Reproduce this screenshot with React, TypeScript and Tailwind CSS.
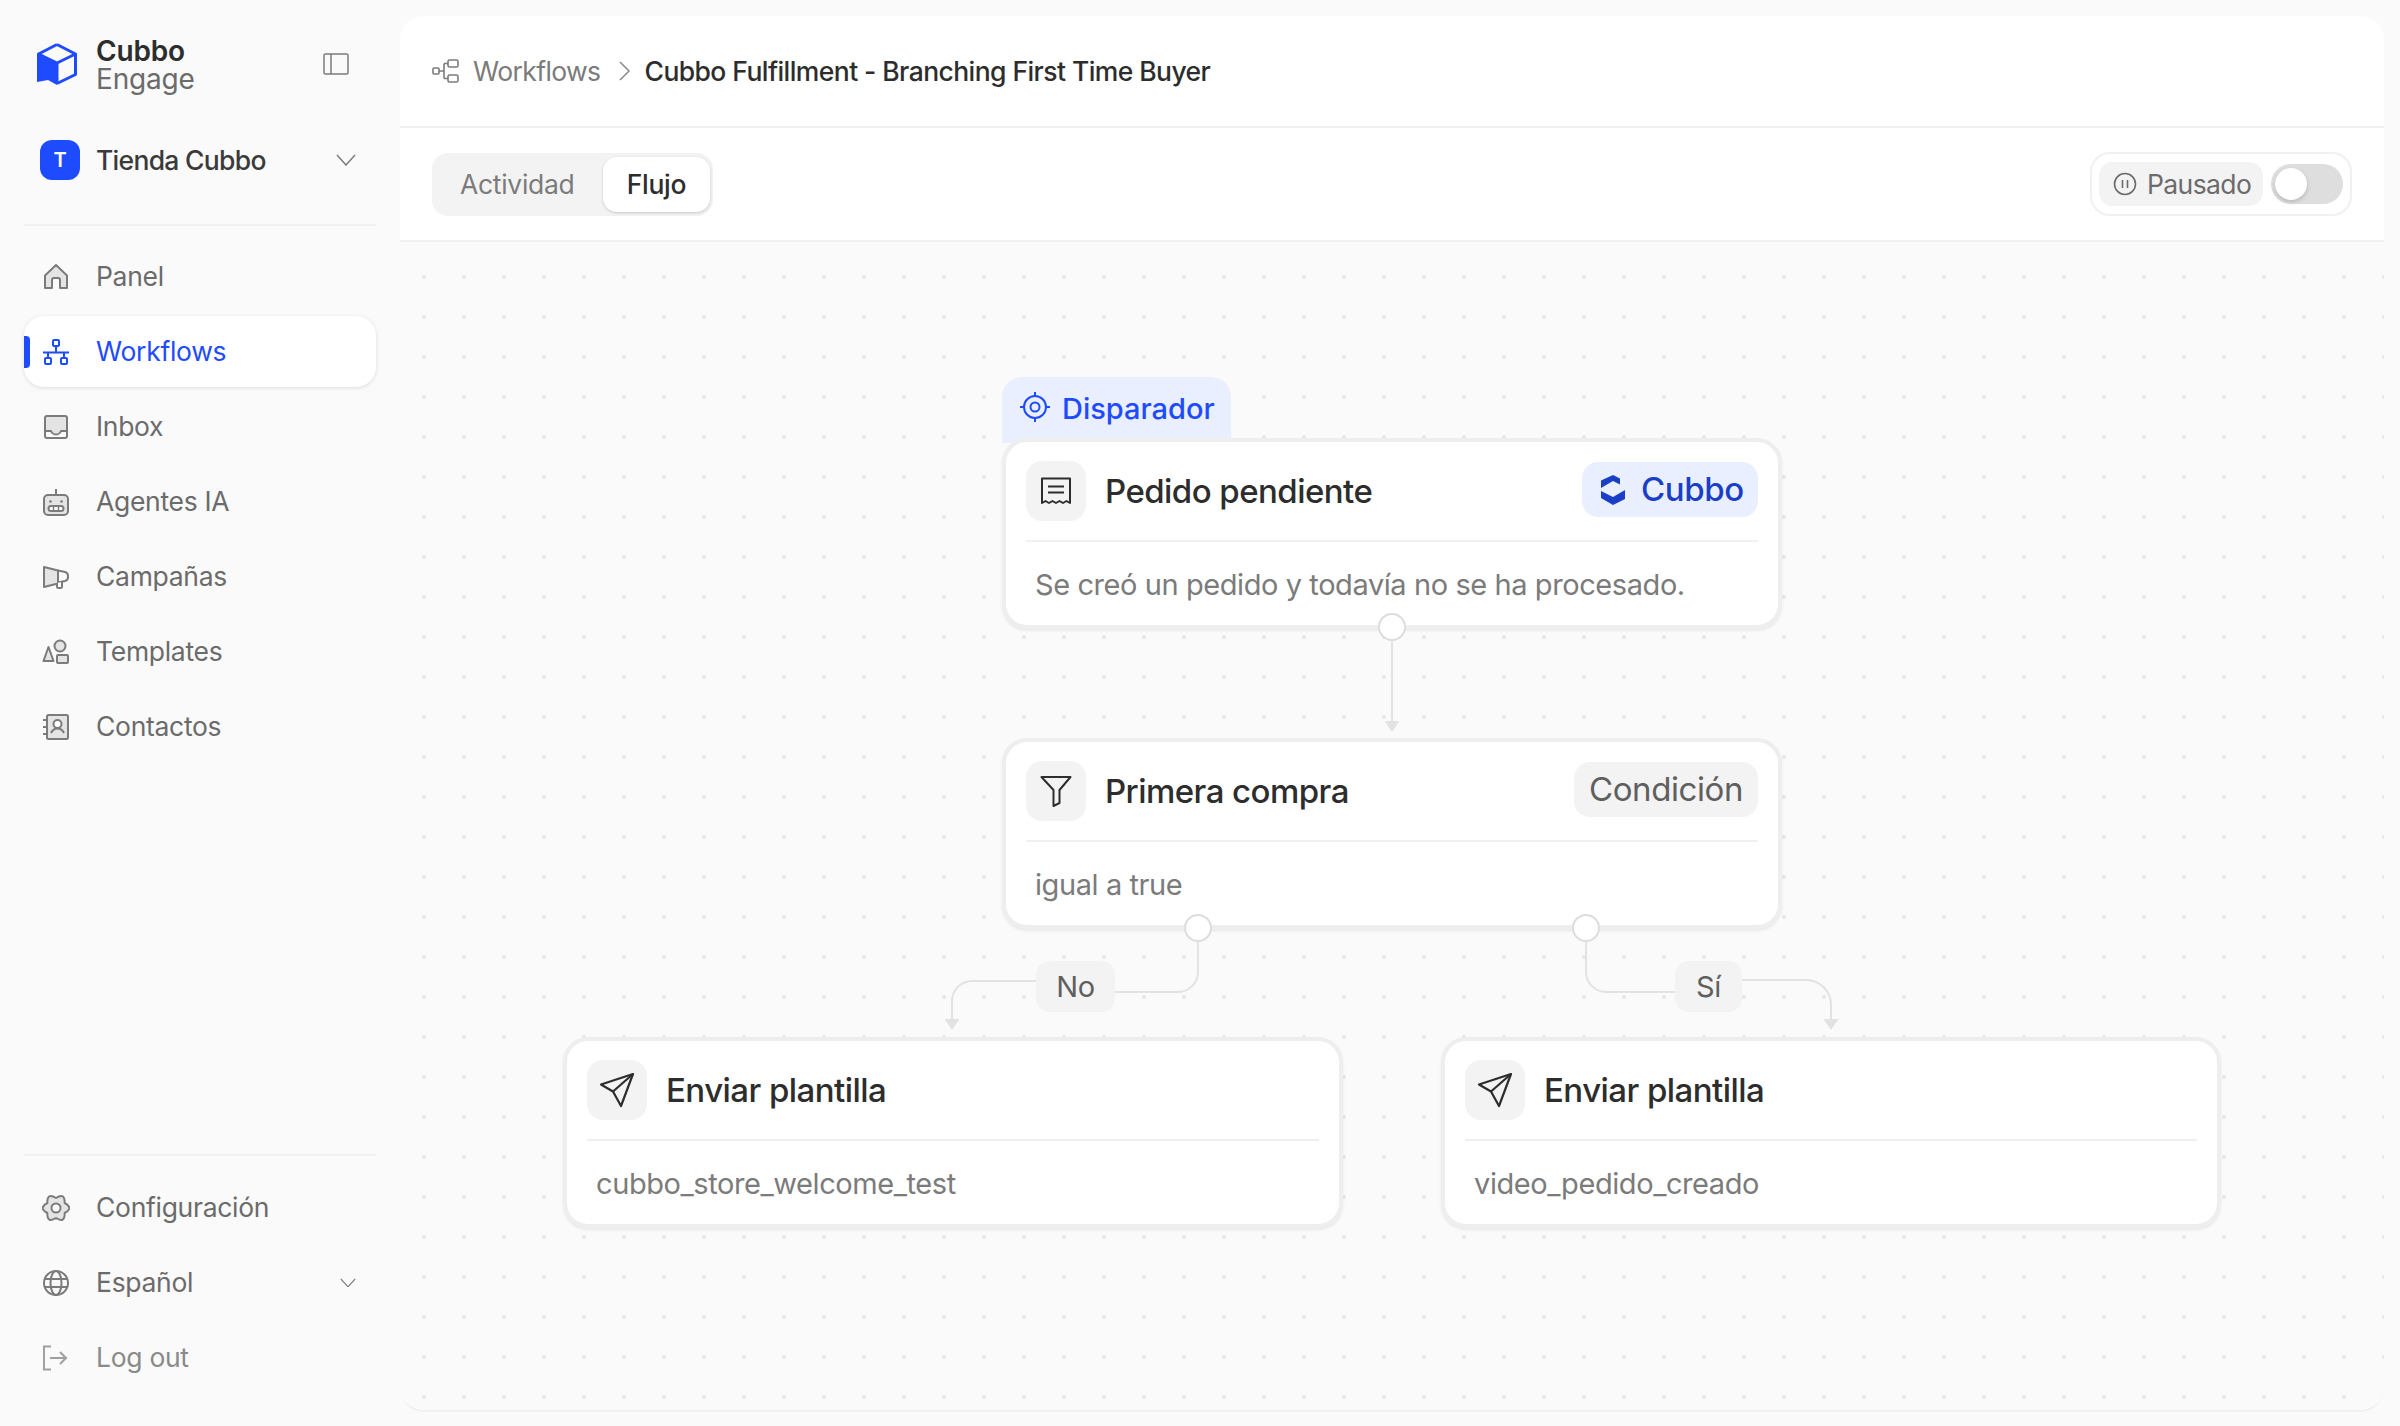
import React from "react";

const G = "#7b7b7b";
const F = "#e4e4e4";

const HomeIcon = () => (
  <svg width="28" height="28" viewBox="0 0 28 28" fill="none" stroke={G} strokeWidth="2" strokeLinejoin="round">
    <path d="M3 25V12.500L14 2l11 10.500V25h-7v-8a2 2 0 0 0-2-2h-4a2 2 0 0 0-2 2v8H3Z" fill={F} />
  </svg>
);
const FlowIcon = () => (
  <svg width="28" height="28" viewBox="0 0 28 28" fill="none" stroke="#1f4bff" strokeWidth="2" strokeLinejoin="round">
    <rect x="11" y="2" width="6" height="6" rx="1" />
    <path d="M14 8v6M1 14.500h26M6 14.500V20M22 14.500V20" />
    <rect x="3" y="20" width="6" height="6" rx="1" />
    <rect x="19" y="20" width="6" height="6" rx="1" />
  </svg>
);
const InboxIcon = () => (
  <svg width="28" height="28" viewBox="0 0 28 28" fill="none" stroke={G} strokeWidth="2" strokeLinejoin="round">
    <path d="M4 4h20v13h-5c-1 3-2.500 4-5 4s-4-1-5-4H4V4Z" fill={F} stroke="none" />
    <rect x="3" y="3" width="22" height="22" rx="2" />
    <path d="M3 18h6c1 2.500 2.500 3.500 5 3.500s4-1 5-3.500h6" />
  </svg>
);
const RobotIcon = () => (
  <svg width="28" height="28" viewBox="0 0 28 28" fill="none" stroke={G} strokeWidth="2" strokeLinejoin="round">
    <path d="M14 1v6" />
    <rect x="2" y="7" width="24" height="20" rx="4" fill={F} />
    <circle cx="8.500" cy="13.500" r="1.300" fill={G} stroke="none" />
    <circle cx="19.500" cy="13.500" r="1.300" fill={G} stroke="none" />
    <rect x="6.500" y="18" width="15" height="5" rx="2.500" fill="#fff" />
    <path d="M11.500 18v5M16.500 18v5" strokeWidth="1.500" />
  </svg>
);
const MegaIcon = () => (
  <svg width="28" height="24" viewBox="0 0 28 24" fill="none" stroke={G} strokeWidth="2" strokeLinejoin="round">
    <path d="M2 2l14 3.500v13L2 22V2Z" fill={F} />
    <path d="M16 5.500l7 1.500a4 4 0 0 1 3 4v1a4 4 0 0 1-3 4l-7 1.500" />
    <path d="M15 18v3.500a1.500 1.500 0 0 0 1.500 1.500h2a1.500 1.500 0 0 0 1.500-1.500V17" fill="#fff" />
  </svg>
);
const ShapesIcon = () => (
  <svg width="28" height="26" viewBox="0 0 28 26" fill="none" stroke={G} strokeWidth="2" strokeLinejoin="round">
    <circle cx="18" cy="7" r="5.500" fill={F} />
    <path d="M6.500 8L1.500 22h10L6.500 8Z" fill={F} />
    <rect x="15" y="16" width="11" height="8" rx="1" fill={F} />
  </svg>
);
const ContactIcon = () => (
  <svg width="28" height="28" viewBox="0 0 28 28" fill="none" stroke={G} strokeWidth="2" strokeLinejoin="round">
    <rect x="5" y="2" width="21" height="24" rx="1.500" fill={F} />
    <path d="M1 7h4M1 14h4M1 21h4" />
    <circle cx="15.500" cy="11" r="4" fill="#fff" />
    <path d="M9 20c1.500-3 3.500-4.500 6.500-4.500S20.500 17 22 20" />
  </svg>
);
const GearIcon = () => (
  <svg width="28" height="28" viewBox="0 0 28 28" fill="none" stroke={G} strokeWidth="2" strokeLinejoin="round">
    <path d="M22.660 9Q32 14 22.660 19 23 29.600 14 24 5 29.600 5.340 19-4 14 5.340 9 5-1.600 14 4 23-1.600 22.660 9Z" fill={F} />
    <circle cx="14" cy="14" r="4.500" fill="#fafafa" />
  </svg>
);
const GlobeIcon = () => (
  <svg width="28" height="28" viewBox="0 0 28 28" fill="none" stroke={G} strokeWidth="2">
    <circle cx="14" cy="14" r="12" />
    <ellipse cx="14" cy="14" rx="5.500" ry="12" />
    <path d="M2.500 10h23M2.500 18h23" />
  </svg>
);
const LogoutIcon = () => (
  <svg width="26" height="26" viewBox="0 0 26 26" fill="none" stroke="#a0a0a0" strokeWidth="2">
    <path d="M9 1.500H2v23h7" />
    <path d="M8 13h16M18 7l6 6-6 6" />
  </svg>
);
const Chevron = ({ size = 20 }: { size?: number }) => (
  <svg width={size} height={size * 0.6} viewBox="0 0 20 12" fill="none" stroke="#7b7b7b" strokeWidth="1.500">
    <path d="M1 1l9 10 9-10" />
  </svg>
);
const Logo = () => (
  <svg width="42" height="44" viewBox="0 0 42 44" fill="none">
    <path d="M21 2.500L39.500 12v20.500L21 41.500" stroke="#1f4bff" strokeWidth="3" strokeLinejoin="round" />
    <path d="M21 2.500L2.500 12 21 21l18.500-9" stroke="#1f4bff" strokeWidth="3" strokeLinejoin="round" />
    <path d="M21 21v20.500" stroke="#1f4bff" strokeWidth="3" />
    <path d="M1 12l20 9.500V43l-9-5-11 2V12Z" fill="#1f4bff" />
  </svg>
);
const PanelIcon = () => (
  <svg width="26" height="22" viewBox="0 0 26 22" fill="none" stroke="#7b7b7b" strokeWidth="1.500">
    <rect x="1" y="1" width="24" height="20" rx="1.500" />
    <path d="M8 1v20" />
  </svg>
);
const ReceiptIcon = () => (
  <svg width="32" height="30" viewBox="0 0 32 30" fill="none" stroke="#2d2d2d" strokeWidth="2">
    <path d="M2 27V2.500h28V27l-3.500-2-3.500 2-3.500-2-3.500 2-3.500-2-3.500 2-3.500-2L2 27Z" strokeLinejoin="round" />
    <path d="M8 10.500h16M8 16.500h16" />
  </svg>
);
const FilterIcon = () => (
  <svg width="32" height="32" viewBox="0 0 32 32" fill="none" stroke="#2d2d2d" strokeWidth="2" strokeLinejoin="round">
    <path d="M1.500 2h29L19.500 15v13l-6 3V15L1.500 2Z" />
  </svg>
);
const SendIcon = () => (
  <svg width="36" height="36" viewBox="0 0 36 36" fill="none" stroke="#2d2d2d" strokeWidth="2.200" strokeLinejoin="round">
    <path d="M34 2L2 12.500l12 7L22 34 34 2Z" />
    <path d="M14 19.500L34 2" />
  </svg>
);
const TargetIcon = () => (
  <svg width="30" height="30" viewBox="0 0 30 30" fill="none" stroke="#1f4bff" strokeWidth="2">
    <circle cx="15" cy="15" r="11" />
    <circle cx="15" cy="15" r="4.500" />
    <path d="M15 0v5M15 25v5M0 15h5M25 15h5" />
  </svg>
);
const CubboMark = () => (
  <svg width="25" height="30" viewBox="0 0 25 30" fill="#1a3fc6">
    <path d="M0 5.500L12 0l7 3.500v6L12 6 0 13Z" />
    <path d="M0 16l12 6 12-7v9l-12 6-12-7Z" />
  </svg>
);
const FlowCrumbIcon = () => (
  <svg width="28" height="24" viewBox="0 0 28 24" fill="none" stroke="#7b7b7b" strokeWidth="1.600">
    <rect x="1" y="9" width="6" height="6" rx="1" />
    <rect x="16" y="1" width="10" height="7" rx="1.500" />
    <rect x="16" y="16" width="10" height="7" rx="1.500" />
    <path d="M7 12h5M12 4.500h4M12 19.500h4M12 4.500v15" />
  </svg>
);
const PauseIcon = () => (
  <svg width="24" height="24" viewBox="0 0 24 24" fill="none" stroke="#6b6b6b" strokeWidth="1.600">
    <circle cx="12" cy="12" r="10.500" />
    <path d="M9.500 8v8M14.500 8v8" />
  </svg>
);

const NavItem = ({ icon, label, active, muted, chevron }: { icon: React.ReactNode; label: string; active?: boolean; muted?: boolean; chevron?: boolean }) => (
  <div
    className={
      active
        ? "relative flex h-[71px] items-center rounded-[20px] bg-white pl-[18px] text-[#1f4bff] shadow-[0_1px_4px_rgba(0,0,0,0.12)]"
        : muted
          ? "relative flex h-[71px] items-center rounded-[20px] pl-[18px] text-[#8a8a8a]"
          : "relative flex h-[71px] items-center rounded-[20px] pl-[18px] text-[#6b6b6b]"
    }
  >
    {active && <span className="absolute left-0 top-[20px] h-[32px] w-[6px] rounded-r-[4px] bg-[#1f4bff]" />}
    <span className="flex w-[54px] items-center justify-start">{icon}</span>
    <span className="text-[26.500px] leading-none tracking-[-0.3px]">{label}</span>
    {chevron && (
      <span className="ml-auto mr-[20px]">
        <Chevron size={16} />
      </span>
    )}
  </div>
);

const IconBox = ({ children }: { children: React.ReactNode }) => (
  <div className="flex h-[60px] w-[60px] items-center justify-center rounded-[16px] bg-[#f3f3f3]">{children}</div>
);

const Card = ({ pos, icon, title, badge, desc }: { pos: string; icon: React.ReactNode; title: string; badge?: React.ReactNode; desc: string }) => (
  <div className={"absolute h-[191px] w-[780px] rounded-[25px] border-[4px] border-[#eeeeee] bg-white shadow-[0_2px_3px_rgba(0,0,0,0.07)] " + pos}>
    <div className="mx-[20px] flex h-[100px] items-center justify-between border-b-2 border-[#f0f0f0]">
      <div className="flex items-center gap-[19px]">
        <IconBox>{icon}</IconBox>
        <span className="text-[33px] font-medium leading-none tracking-[-0.55px] text-[#2d2d2d]">{title}</span>
      </div>
      {badge}
    </div>
    <p className="pl-[29px] pt-[25px] text-[29px] leading-[36px] tracking-[-0.42px] text-[#7b7b7b]">{desc}</p>
  </div>
);

const Handle = ({ pos }: { pos: string }) => (
  <div className={"absolute h-[28px] w-[28px] rounded-full border-2 border-[#dddddd] bg-white " + pos} />
);

const EdgeLabel = ({ pos, children }: { pos: string; children: React.ReactNode }) => (
  <div className={"absolute flex h-[51px] items-center justify-center rounded-[14px] bg-[#f3f3f3] text-[29px] leading-none tracking-[-0.3px] text-[#5f5f5f] " + pos}>
    {children}
  </div>
);

export default function App() {
  return (
    <div className="flex h-[1426px] w-[2400px] overflow-hidden bg-[#fafafa] font-['Inter','Liberation_Sans',sans-serif]">
      <aside className="flex h-full w-[400px] shrink-0 flex-col px-[24px]">
        <div className="flex h-[104px] items-center pl-[12px] pt-[24px]">
          <Logo />
          <div className="ml-[18px] flex flex-col pt-[1px] text-[28px] leading-[28px] tracking-[-0.2px]">
            <span className="font-semibold text-[#2d2d2d]">Cubbo</span>
            <span className="text-[#6b6b6b]">Engage</span>
          </div>
          <span className="ml-auto mr-[27px]">
            <PanelIcon />
          </span>
        </div>
        <div className="mt-[20px] flex h-[72px] items-center pl-[16px]">
          <span className="flex h-[40px] w-[40px] items-center justify-center rounded-[12px] bg-[#1f4bff] text-[20px] font-semibold text-white">T</span>
          <span className="ml-[16px] text-[26.500px] font-medium leading-none tracking-[-0.7px] text-[#3a3a3a]">Tienda Cubbo</span>
          <span className="ml-auto mr-[20px]">
            <Chevron />
          </span>
        </div>
        <div className="mt-[28px] h-[2px] bg-[#f0f0f0]" />
        <nav className="mt-[15px] flex flex-col gap-[4px]">
          <NavItem icon={<HomeIcon />} label="Panel" />
          <NavItem icon={<FlowIcon />} label="Workflows" active />
          <NavItem icon={<InboxIcon />} label="Inbox" />
          <NavItem icon={<RobotIcon />} label="Agentes IA" />
          <NavItem icon={<MegaIcon />} label="Campañas" />
          <NavItem icon={<ShapesIcon />} label="Templates" />
          <NavItem icon={<ContactIcon />} label="Contactos" />
        </nav>
        <div className="mt-auto h-[2px] bg-[#f0f0f0]" />
        <div className="mb-[33px] mt-[16px] flex flex-col gap-[4px]">
          <NavItem icon={<GearIcon />} label="Configuración" />
          <NavItem icon={<GlobeIcon />} label="Español" chevron />
          <NavItem icon={<LogoutIcon />} label="Log out" muted />
        </div>
      </aside>

      <main className="mb-[14px] mt-[16px] flex w-[1984px] flex-col overflow-hidden rounded-[24px] border-b-2 border-[#f0f0f0]">
        <header className="flex h-[112px] shrink-0 items-center border-b-2 border-[#f0f0f0] bg-white pl-[32px]">
          <FlowCrumbIcon />
          <span className="ml-[13px] text-[26.500px] leading-none tracking-[-0.6px] text-[#7b7b7b]">Workflows</span>
          <svg className="ml-[18px]" width="12" height="20" viewBox="0 0 12 20" fill="none" stroke="#8a8a8a" strokeWidth="1.500">
            <path d="M1 1l9 9-9 9" />
          </svg>
          <span className="ml-[14px] text-[26.500px] font-medium leading-none tracking-[-0.57px] text-[#2d2d2d]">Cubbo Fulfillment - Branching First Time Buyer</span>
        </header>
        <div className="flex h-[114px] shrink-0 items-center justify-between border-b-2 border-[#f0f0f0] bg-white pl-[32px] pr-[32px]">
          <div className="flex h-[63px] w-[281px] items-center rounded-[16px] bg-[#f3f3f3] pl-[28px] pr-[3px]">
            <span className="text-[26.500px] leading-none tracking-[-0.3px] text-[#7b7b7b]">Actividad</span>
            <span className="ml-auto flex h-[55px] w-[107px] items-center justify-center rounded-[14px] bg-white text-[26.500px] font-medium leading-none tracking-[-0.3px] text-[#2d2d2d] shadow-[0_1px_3px_rgba(0,0,0,0.18)]">
              Flujo
            </span>
          </div>
          <div className="flex h-[64px] w-[262px] items-center rounded-[20px] border-2 border-[#f0f0f0] pl-[7px]">
            <div className="flex h-[44px] w-[164px] items-center gap-[10px] rounded-[14px] bg-[#f3f3f3] pl-[14px]">
              <PauseIcon />
              <span className="text-[26.500px] leading-none tracking-[-0.6px] text-[#6b6b6b]">Pausado</span>
            </div>
            <div className="ml-[8px] flex h-[40px] w-[72px] items-center rounded-full bg-[#dedede] pl-[4px]">
              <div className="h-[32px] w-[32px] rounded-full bg-white shadow-[0_2px_4px_rgba(0,0,0,0.18)]" />
            </div>
          </div>
        </div>
        <section className="relative flex-1 bg-[#fafafa] bg-[radial-gradient(circle,#e6e6e6_1.500px,transparent_2.500px)] bg-[size:40px_40px] bg-[position:4px_15px]">
          <svg className="pointer-events-none absolute inset-0 h-full w-full" viewBox="400 242 1984 1168" fill="none" stroke="#e2e2e2" strokeWidth="2">
            <path d="M1392 640V722" />
            <path d="M1198 940V972a20 20 0 0 1-20 20H1110" />
            <path d="M1040 981H972a20 20 0 0 0-20 20V1020" />
            <path d="M1586 940V972a20 20 0 0 0 20 20H1680" />
            <path d="M1740 980H1806a25 25 0 0 1 25 25V1020" />
            <path d="M1384.500 721h15L1392 732Z" fill="#e2e2e2" stroke="none" />
            <path d="M944.500 1019h15L952 1030Z" fill="#e2e2e2" stroke="none" />
            <path d="M1823.500 1019h15L1831 1030Z" fill="#e2e2e2" stroke="none" />
          </svg>

          <div className="absolute left-[602px] top-[135px] flex h-[66px] w-[229px] items-start gap-[12px] rounded-t-[20px] bg-[#e9effe] pl-[18px] pt-[15px] text-[29px] font-medium leading-[34px] tracking-[0px] text-[#1f4bff]">
            <TargetIcon />
            <span>Disparador</span>
          </div>
          <Card
            pos="left-[602px] top-[196px]"
            icon={<ReceiptIcon />}
            title="Pedido pendiente"
            desc="Se creó un pedido y todavía no se ha procesado."
            badge={
              <div className="mb-[3px] flex h-[55px] w-[176px] items-center gap-[15px] rounded-[16px] bg-[#e9effe] pl-[19px] text-[33px] font-medium leading-none tracking-[-0.4px] text-[#1a3fc6]">
                <CubboMark />
                <span>Cubbo</span>
              </div>
            }
          />
          <Card
            pos="left-[602px] top-[496px]"
            icon={<FilterIcon />}
            title="Primera compra"
            desc="igual a true"
            badge={
              <div className="mb-[3px] flex h-[55px] w-[184px] items-center justify-center rounded-[16px] bg-[#f3f3f3] text-[33px] leading-none tracking-[-0.4px] text-[#5f5f5f]">
                Condición
              </div>
            }
          />
          <Card pos="left-[163px] top-[795px]" icon={<SendIcon />} title="Enviar plantilla" desc="cubbo_store_welcome_test" />
          <Card pos="left-[1041px] top-[795px]" icon={<SendIcon />} title="Enviar plantilla" desc="video_pedido_creado" />

          <Handle pos="left-[978px] top-[371px]" />
          <Handle pos="left-[784px] top-[672px]" />
          <Handle pos="left-[1172px] top-[672px]" />
          <EdgeLabel pos="left-[636px] top-[719px] w-[79px]">No</EdgeLabel>
          <EdgeLabel pos="left-[1275px] top-[719px] w-[67px]">Sí</EdgeLabel>
        </section>
      </main>
    </div>
  );
}
